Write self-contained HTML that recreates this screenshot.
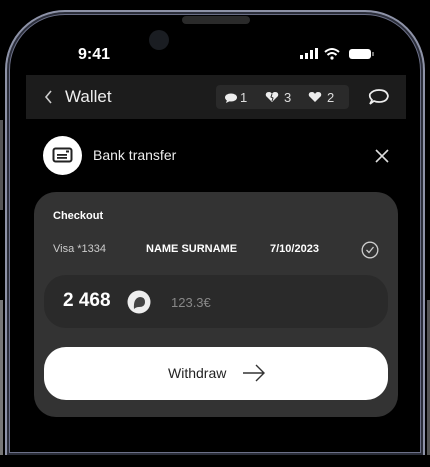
<!DOCTYPE html>
<html style="width:430px;height:467px;overflow:hidden"><head><style>
*{margin:0;padding:0;box-sizing:border-box}
body{width:430px;height:467px;background:#000;position:relative;overflow:hidden;font-family:"Liberation Sans",sans-serif;color:#fff}
.a{position:absolute}
</style></head><body>
<div class="a" style="left:5px;top:10px;width:420px;height:445px;border:2px solid #8e93a8;border-bottom:none;border-radius:60px 60px 0 0;box-shadow:inset 0 0 0 2px #2b2e3a, inset 0 0 0 3px #6c7088"></div>
<div class="a" style="left:0;top:120px;width:3px;height:90px;background:#555"></div>
<div class="a" style="left:0;top:300px;width:3px;height:155px;background:#777"></div>
<div class="a" style="left:427px;top:300px;width:3px;height:155px;background:#555"></div>
<div class="a" style="left:182px;top:16px;width:68px;height:8px;background:#2a2a2a;border-radius:4px"></div>
<div class="a" style="left:149px;top:30px;width:20px;height:20px;background:#1a1d22;border-radius:50%"></div>
<div class="a" style="left:78px;top:46px;font-size:16px;font-weight:bold">9:41</div>
<svg class="a" style="left:298px;top:47px" width="80" height="14">
<rect x="2" y="8" width="3" height="4" fill="#fff"/><rect x="7" y="6" width="3" height="6" fill="#fff"/><rect x="12" y="3" width="3" height="9" fill="#fff"/><rect x="17" y="1" width="3" height="11" fill="#fff"/>
<path d="M27 5 Q34 -1 41 5 M29.5 8 Q34 4 38.5 8" stroke="#fff" stroke-width="2" fill="none"/><circle cx="34" cy="11" r="1.6" fill="#fff"/>
<rect x="51" y="2" width="22" height="10" rx="3" fill="#fff"/><rect x="74" y="5" width="2" height="4" fill="#777"/>
</svg>
<div class="a" style="left:26px;top:75px;width:380px;height:44px;background:#1c1c1c"></div>
<svg class="a" style="left:44px;top:90px" width="10" height="14"><path d="M7 1 L2 7 L7 13" stroke="#ccc" stroke-width="1.6" fill="none"/></svg>
<div class="a" style="left:65px;top:87px;font-size:17px;color:#eee">Wallet</div>
<div class="a" style="left:216px;top:85px;width:133px;height:24px;background:#2a2a2a;border-radius:4px"></div>
<svg class="a" style="left:224px;top:90px" width="120" height="14">
<ellipse cx="7" cy="7.5" rx="6" ry="4" fill="#eee"/><path d="M3 10 L2 13 L6 11" fill="#eee"/>
<text x="16" y="12" fill="#ddd" font-size="13" font-family="Liberation Sans">1</text>
<path d="M48 12 L42 6 Q41 2 45 2 Q47 2 48 4 Q49 2 51 2 Q55 2 54 6 Z" fill="#eee"/><path d="M48 4 L47 7 L49 8 L48 11" stroke="#2a2a2a" stroke-width="1" fill="none"/>
<text x="60" y="12" fill="#ddd" font-size="13" font-family="Liberation Sans">3</text>
<path d="M91 12 L85 6 Q84 2 88 2 Q90 2 91 4 Q92 2 94 2 Q98 2 97 6 Z" fill="#eee"/>
<text x="103" y="12" fill="#ddd" font-size="13" font-family="Liberation Sans">2</text>
</svg>
<svg class="a" style="left:366px;top:88px" width="26" height="20"><path d="M4 16 L6 12 Q3 9 4 6 Q7 2 13 2 Q21 2 22 8 Q21 14 13 14 Q10 14 8 13 Z" stroke="#eee" stroke-width="1.7" fill="none"/></svg>
<div class="a" style="left:43px;top:136px;width:39px;height:39px;background:#fff;border-radius:50%"></div>
<svg class="a" style="left:52px;top:147px" width="22" height="17"><rect x="1.5" y="1.5" width="18" height="13" rx="2" stroke="#222" stroke-width="2" fill="none"/><rect x="5" y="7" width="10" height="1.8" fill="#222"/><rect x="5" y="10" width="10" height="1.8" fill="#222"/><rect x="14" y="3.5" width="3" height="2" fill="#222"/></svg>
<div class="a" style="left:93px;top:147px;font-size:14px;color:#eee">Bank transfer</div>
<svg class="a" style="left:375px;top:149px" width="14" height="14"><path d="M1 1 L13 13 M13 1 L1 13" stroke="#ddd" stroke-width="1.6"/></svg>
<div class="a" style="left:34px;top:192px;width:364px;height:225px;background:#333;border-radius:22px"></div>
<div class="a" style="left:53px;top:210px;font-size:11px;font-weight:bold">Checkout</div>
<div class="a" style="left:53px;top:243px;font-size:11px;color:#ccc">Visa *1334</div>
<div class="a" style="left:146px;top:243px;font-size:11px;font-weight:bold">NAME SURNAME</div>
<div class="a" style="left:270px;top:243px;font-size:11px;font-weight:bold">7/10/2023</div>
<svg class="a" style="left:361px;top:241px" width="18" height="18"><circle cx="9" cy="9" r="7.8" stroke="#ccc" stroke-width="1.3" fill="none"/><path d="M5.5 9 L8 11.5 L12.5 6" stroke="#ccc" stroke-width="1.3" fill="none"/></svg>
<div class="a" style="left:44px;top:275px;width:344px;height:53px;background:#2a2a2a;border-radius:22px"></div>
<div class="a" style="left:63px;top:290px;font-size:19px;font-weight:bold">2 468</div>
<svg class="a" style="left:127px;top:290px" width="24" height="24"><circle cx="12" cy="12" r="11.5" fill="#eee"/><path d="M7 19 Q6 8 13 7 Q18 7 18 12 Q18 17 12 17 Q9 17 7 19Z" fill="#444"/></svg>
<div class="a" style="left:171px;top:295px;font-size:13px;color:#888">123.3€</div>
<div class="a" style="left:44px;top:347px;width:344px;height:53px;background:#fff;border-radius:22px"></div>
<div class="a" style="left:168px;top:365px;font-size:14px;color:#222">Withdraw</div>
<svg class="a" style="left:242px;top:363px" width="24" height="20"><path d="M1 10 L22 10 M14 2 L22 10 L14 18" stroke="#333" stroke-width="1.4" fill="none"/></svg>
</body></html>
